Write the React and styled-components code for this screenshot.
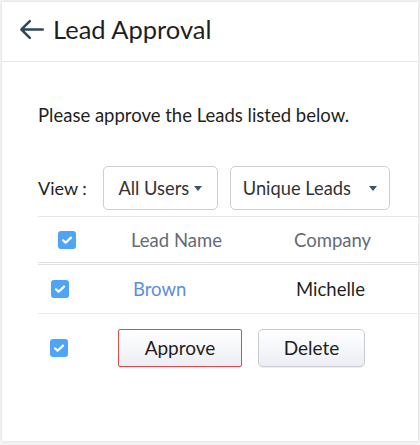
import styled, { createGlobalStyle } from "styled-components";

const Global = createGlobalStyle`
    body {
        margin: 0;
        background: #f4f4f4;
        font-family: Lato, "Open Sans", sans-serif;
    }
`

export default function App() {
    return (
        <>
            <Global />
            <Panel>
                <Header>
                    <BackArrow viewBox="0 0 24 24">
                        <path d="M22 12H3M10.5 4.5L3 12l7.5 7.5" />
                    </BackArrow>
                    <Title>Lead Approval</Title>
                </Header>
                <Body>
                    <Message>Please approve the Leads listed below.</Message>
                    <Filters>
                        <ViewLabel>View :</ViewLabel>
                        <Dropdown width={115} gap={5}>All Users<Caret /></Dropdown>
                        <Dropdown width={160} gap={18}>Unique Leads<Caret /></Dropdown>
                    </Filters>
                    <Table>
                        <HeadRow>
                            <Check offset={20} />
                            <HeadCell>Lead Name</HeadCell>
                            <HeadCell>Company</HeadCell>
                        </HeadRow>
                        <Row>
                            <Check offset={13} />
                            <NameLink>Brown</NameLink>
                            <Cell>Michelle</Cell>
                        </Row>
                        <ActionRow>
                            <Check offset={12} />
                            <Button focused>Approve</Button>
                            <Button>Delete</Button>
                        </ActionRow>
                    </Table>
                </Body>
            </Panel>
        </>
    )
}

function Check({ offset }) {
    return (
        <CheckBox offset={offset}>
            <svg viewBox="0 0 18 18" width="18" height="18">
                <path d="M5 9.3l2.6 2.5L13 6.6" fill="none" stroke="#fff" strokeWidth="2.2" strokeLinecap="round" strokeLinejoin="round" />
            </svg>
        </CheckBox>
    )
}

const Panel = styled.div`
    margin: 2px;
    width: 416px;
    height: 439px;
    background: #fff;
    box-shadow: 0 0 3px rgba(0, 0, 0, 0.12);
    overflow: hidden;
`

const Header = styled.div`
    box-sizing: border-box;
    height: 60px;
    display: flex;
    align-items: center;
    padding: 0 0 5px 16px;
    border-bottom: 1px solid #e6e6e6;
`

const BackArrow = styled.svg`
    width: 27px;
    height: 27px;
    fill: none;
    stroke: #2f4858;
    stroke-width: 2.2;
    stroke-linecap: round;
    stroke-linejoin: round;
    margin-right: 8px;
`

const Title = styled.h1`
    margin: 0;
    font-size: 25.5px;
    font-weight: 400;
    color: #1f1f1f;
`

const Body = styled.div`
    padding-left: 36px;
`

const Message = styled.p`
    margin: 41px 0 0;
    font-size: 18.5px;
    line-height: 24px;
    color: #1f1f1f;
`

const Filters = styled.div`
    display: flex;
    align-items: center;
    gap: 12px;
    margin-top: 39px;
`

const ViewLabel = styled.span`
    font-size: 18px;
    color: #1f1f1f;
    margin-right: 4px;
`

const Dropdown = styled.div`
    box-sizing: border-box;
    width: ${p => p.width}px;
    height: 44px;
    border: 1px solid #cfcfcf;
    border-radius: 5px;
    display: flex;
    align-items: center;
    justify-content: center;
    gap: ${p => p.gap}px;
    font-size: 18.3px;
    color: #333;
`

const Caret = styled.span`
    width: 0;
    height: 0;
    border-left: 4px solid transparent;
    border-right: 4px solid transparent;
    border-top: 5px solid #3c5566;
`

const Table = styled.div`
    width: 420px;
    margin-top: 6px;
    border-top: 1px solid #e4e4e4;
`

const HeadRow = styled.div`
    display: grid;
    grid-template-columns: 93px 163px 1fr;
    align-items: center;
    height: 45px;
    border-bottom: 3px double #e2e2e2;
`

const Row = styled.div`
    display: grid;
    grid-template-columns: 95px 163px 1fr;
    align-items: center;
    height: 48px;
    border-bottom: 1px solid #ebebeb;
`

const ActionRow = styled.div`
    display: flex;
    align-items: center;
    height: 67px;
`

const CheckBox = styled.span`
    display: flex;
    width: 18px;
    height: 18px;
    margin-left: ${p => p.offset}px;
    border-radius: 3px;
    background: #4ea5f7;
`

const HeadCell = styled.span`
    font-size: 18.5px;
    color: #656b73;
`

const Cell = styled.span`
    font-size: 18.5px;
    color: #1f1f1f;
`

const NameLink = styled.span`
    font-size: 18.5px;
    color: #5b8ee6;
`

const Button = styled.button`
    box-sizing: border-box;
    height: 38px;
    width: ${p => p.focused ? 124 : 107}px;
    margin-left: ${p => p.focused ? 50 : 16}px;
    border: 1px solid ${p => p.focused ? "#e5484d" : "#c8cbd6"};
    border-radius: ${p => p.focused ? 2 : 5}px;
    background: linear-gradient(#ffffff, #eceef4);
    box-shadow: 0 1px 1px rgba(0, 0, 0, 0.08);
    font-family: Lato, sans-serif;
    font-size: 19px;
    color: #1f1f1f;
    padding: 0;
`
